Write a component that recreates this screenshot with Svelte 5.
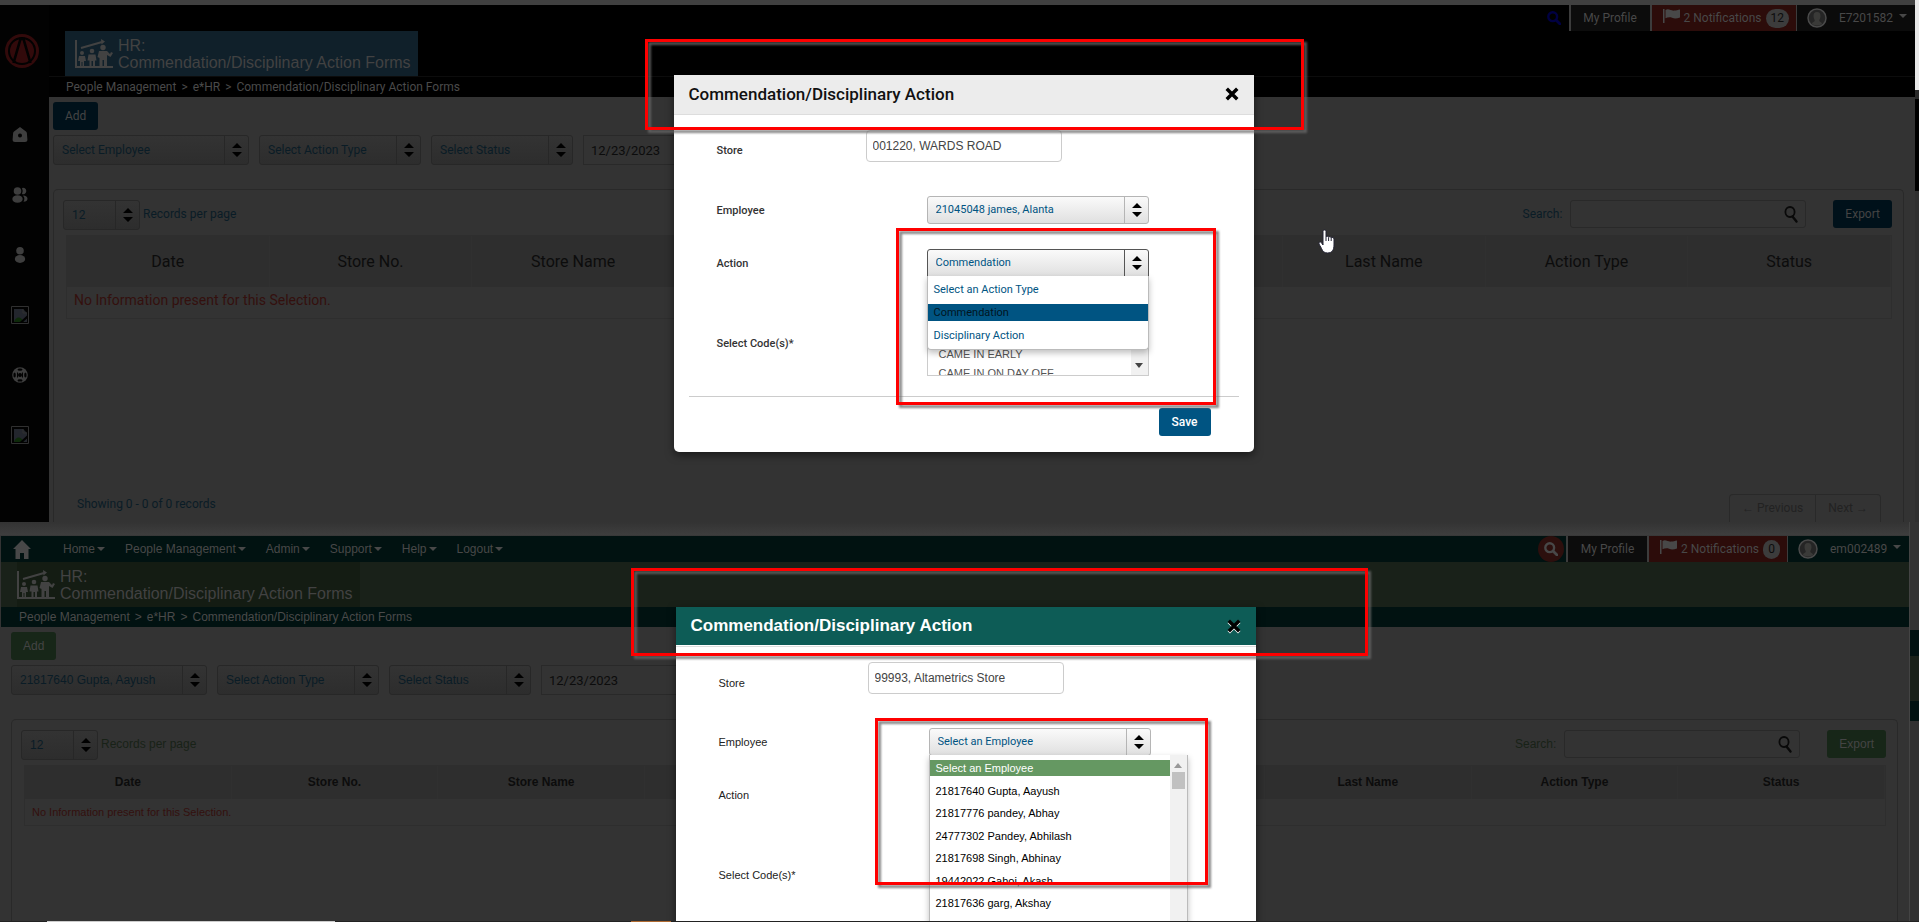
<script>
  const columns = ['Date', 'Store No.', 'Store Name', '', '', '', 'Last Name', 'Action Type', 'Status'];
  const menu = ['Home', 'People Management', 'Admin', 'Support', 'Help', 'Logout'];
  const sideIcons = ['home', 'team', 'person', 'broken', 'globe', 'broken'];
  const actionTypes = ['Select an Action Type', 'Commendation', 'Disciplinary Action'];
  const employees = [
    'Select an Employee',
    '21817640 Gupta, Aayush',
    '21817776 pandey, Abhay',
    '24777302 Pandey, Abhilash',
    '21817698 Singh, Abhinay',
    '19442022 Gahoi, Akash',
    '21817636 garg, Akshay'
  ];
</script>

{#snippet picker(id, label, value, size)}
  <span class="picker {size}">
    <select {id} aria-label={label}>
      <option>{value}</option>
    </select>
    <svg class="arrows" viewBox="0 0 10 14" aria-hidden="true">
      <path d="M5 0 10 5H0zM5 14 0 9h10z" />
    </svg>
  </span>
{/snippet}

{#snippet caret()}
  <svg class="caret" viewBox="0 0 8 4" aria-hidden="true"><path d="M0 0h8L4 4z" /></svg>
{/snippet}

{#snippet glass()}
  <svg class="glass" viewBox="0 0 14 14" aria-hidden="true">
    <circle cx="5.7" cy="5.7" r="4.4" fill="none" stroke="currentColor" stroke-width="2.4" />
    <path d="m9 9 4 4" stroke="currentColor" stroke-width="2.8" stroke-linecap="round" />
  </svg>
{/snippet}

{#snippet account(user, count)}
  <div class="account">
    <button class="find" aria-label="Search site">{@render glass()}</button>
    <a class="profile" href="#profile">My Profile</a>
    <a class="notes" href="#notifications">
      <svg class="flag" viewBox="0 0 17 14" aria-hidden="true">
        <path d="M0 0h1.500v14H0zM2.500 1c3-2 5.500 1 8.500 .6 2 0 4-1 6-1.200v8c-3 1-5 1.500-8 .4-2-.8-4.500-.4-6.500 .4z" />
      </svg>
      <span>2 Notifications</span>
      <span class="count">{count}</span>
    </a>
    <a class="user" href="#account">
      <svg class="avatar" viewBox="0 0 20 20" aria-hidden="true">
        <circle cx="10" cy="10" r="9" fill="#252525" stroke="#4a4a4a" stroke-width="1.500" />
        <path d="M10 4c3 0 3.800 2 3.400 5-.3 2-1 2.600-1.200 3.500.3 1.500 2.500 1.500 3 3.200a8 8 0 0 1-10.400 0c.5-1.700 2.700-1.700 3-3.200-.2-.9-.9-1.500-1.200-3.500C6.200 6 7 4 10 4z" fill="#3a3a38" />
      </svg>
      <span>{user}</span>
      {@render caret()}
    </a>
  </div>
{/snippet}

{#snippet heading()}
  <div class="band">
    <h1>
      <svg class="chart" viewBox="0 0 38 30" aria-hidden="true">
        <path d="M1 1v27h37M6 9 27 3" fill="none" stroke="currentColor" stroke-width="2" />
        <path d="m26 0 4 2.500-3.500 3z" />
        <circle cx="7" cy="14" r="2" /><circle cx="17" cy="12" r="2.300" /><circle cx="28" cy="8.500" r="2.700" />
        <path d="M4 17h6l1 5H9v5H7.500v-4h-1v4H5v-5H3zM13.500 15.500h7l1 6H20V27h-2v-5h-1.500v5h-2v-5.500h-2zM24 12h8l3 3 1-2 2 1-2.500 4L32 16v11h-3v-6h-1.500v6h-3v-8l-2-1z" />
      </svg>
      <span>HR:<br />Commendation/Disciplinary Action Forms</span>
    </h1>
  </div>
  <nav class="crumbs" aria-label="Breadcrumb">
    <a href="#people">People Management</a><span>&gt;</span><a href="#ehr">e*HR</a><span>&gt;</span><a href="#forms">Commendation/Disciplinary Action Forms</a>
  </nav>
{/snippet}

{#snippet records(key, employee)}
  <main>
    <button class="btn add">Add</button>
    <div class="filters">
      {@render picker(`${key}-employee`, 'Employee', employee, 'wide')}
      {@render picker(`${key}-type`, 'Action type', 'Select Action Type', 'medium')}
      {@render picker(`${key}-status`, 'Status', 'Select Status', 'small')}
      <input class="date" type="text" value="12/23/2023" aria-label="Date" />
    </div>
    <section class="panel">
      <div class="toolbar">
        {@render picker(`${key}-count`, 'Records per page', '12', 'tiny')}
        <label class="per-page" for="{key}-count">Records per page</label>
        <label class="search-label" for="{key}-search">Search:</label>
        <span class="search">
          <input id="{key}-search" type="text" />
          <svg viewBox="0 0 14 17" aria-hidden="true">
            <ellipse cx="6" cy="6" rx="4.600" ry="5" fill="none" stroke="currentColor" stroke-width="1.800" />
            <path d="m8.500 10.500 4 5" stroke="currentColor" stroke-width="2.400" stroke-linecap="round" />
          </svg>
        </span>
        <button class="btn">Export</button>
      </div>
      <table>
        <thead>
          <tr>{#each columns as column}<th>{column}</th>{/each}</tr>
        </thead>
        <tbody>
          <tr><td colspan={columns.length}>No Information present for this Selection.</td></tr>
        </tbody>
      </table>
      <div class="footer">
        <span>Showing 0 - 0 of 0 records</span>
        <div class="pages">
          <button>← Previous</button>
          <button>Next →</button>
        </div>
      </div>
    </section>
  </main>
{/snippet}

{#snippet dialog(key, store, employee, type)}
  <header>
    <h2>Commendation/Disciplinary Action</h2>
    <button class="close" aria-label="Close">
      <svg viewBox="0 0 12 12" aria-hidden="true"><path d="m1.500 1.500 9 9m0-9-9 9" /></svg>
    </button>
  </header>
  <form>
    <div class="row store">
      <label for="{key}-m-store">Store</label>
      <input id="{key}-m-store" type="text" value={store} />
    </div>
    <div class="row">
      <label for="{key}-m-employee">Employee</label>
      <div class="field">
        {@render picker(`${key}-m-employee`, 'Employee', employee, 'full')}
        {#if key === 'green'}
          <div class="drop employees">
            <ul>
              {#each employees as name, i}
                <li class:picked={i === 0}>{name}</li>
              {/each}
            </ul>
            <div class="bar">
              <svg viewBox="0 0 8 5" aria-hidden="true"><path d="M4 0 8 5H0z" /></svg>
              <i></i>
            </div>
          </div>
        {/if}
      </div>
    </div>
    <div class="row">
      <label for="{key}-m-action">Action</label>
      <div class="field" class:open={key === 'dark'}>
        {@render picker(`${key}-m-action`, 'Action', type, 'full')}
        {#if key === 'dark'}
          <ul class="drop actions">
            {#each actionTypes as name}
              <li class:picked={name === type}>{name}</li>
            {/each}
          </ul>
        {/if}
      </div>
    </div>
    <div class="row codes">
      <span class="label">Select Code(s)*</span>
      <div class="field list">
        <ul>
          {#if key === 'dark'}
            <li>CAME IN EARLY</li>
            <li>CAME IN ON DAY OFF</li>
          {/if}
        </ul>
        <div class="bar">
          <svg viewBox="0 0 8 5" aria-hidden="true"><path d="M0 0h8L4 5z" /></svg>
        </div>
      </div>
    </div>
    <div class="actions-row"><button type="button" class="save">Save</button></div>
  </form>
{/snippet}

<div class="app">
  <section class="screen dark">
    <div class="window">
      <aside>
        <svg class="brand" viewBox="0 0 34 34" aria-hidden="true">
          <circle cx="17" cy="17" r="15.500" fill="none" stroke="currentColor" stroke-width="3" />
          <circle cx="17" cy="17" r="12" />
          <path d="M8.500 29 15.500 5h3l7 24" fill="none" stroke="#020202" stroke-width="2.600" />
        </svg>
        <nav>
          {#each sideIcons as icon}
            <a href="#{icon}" aria-label={icon}>
              <svg viewBox="0 0 18 18" aria-hidden="true">
                {#if icon === 'home'}
                  <path fill-rule="evenodd" d="M9 1l6 4.500c.6.500.8 1 .9 1.700l.5 6.300c0 1.800-.9 2.500-2.400 2.500H4c-1.500 0-2.400-.7-2.400-2.500l.5-6.300c.1-.7.3-1.200.9-1.700zm0 6.500a2 2 0 1 0 0 4 2 2 0 0 0 0-4z" />
                {:else if icon === 'team'}
                  <circle cx="6.500" cy="5" r="3.800" /><ellipse cx="6.500" cy="13" rx="5.200" ry="3.800" />
                  <path d="M11 2a3.200 3.200 0 1 1 0 6 7 7 0 0 0 0-6zM12 9.500c3 0 4.500 1.500 4.500 3.300s-1.500 3-4 3a6 6 0 0 0 .8-4z" />
                {:else if icon === 'person'}
                  <circle cx="9" cy="4.800" r="3.800" /><ellipse cx="9" cy="13" rx="5.200" ry="3.900" />
                {:else if icon === 'globe'}
                  <circle cx="9" cy="9" r="7.800" />
                  <g fill="#020202">
                    <ellipse cx="9" cy="3.600" rx="2.500" ry="1.200" />
                    <ellipse cx="9" cy="14.400" rx="2.500" ry="1.200" />
                    <ellipse cx="3.600" cy="9" rx="1.200" ry="2.500" />
                    <ellipse cx="14.400" cy="9" rx="1.200" ry="2.500" />
                    <circle cx="9" cy="9" r="2" />
                    <path d="M6 6.500h1v5H6zM11 6.500h1v5h-1z" />
                  </g>
                {:else}
                  <path d="M.5.500h17v17H.5z" fill="none" stroke="#303030" />
                  <path d="M3 3h9l4 4v9H3z" fill="#23262d" />
                  <path d="M3 16c2-6 7-6 10 0z" fill="#0e2a0a" />
                  <path d="M16 9.500 9 16h3l4-3.500z" fill="#020202" />
                  <path d="M12 3v4h4" fill="none" stroke="#303030" />
                {/if}
              </svg>
            </a>
          {/each}
        </nav>
      </aside>
      <div class="page">
        <div class="topbar">{@render account('E7201582', 12)}</div>
        {@render heading()}
        {@render records('dark', 'Select Employee')}
      </div>
    </div>
    <div class="edge"><i class="lit"></i><i class="gap"></i><i class="nav-bit"></i></div>
    <div class="modal" role="dialog" aria-label="Commendation/Disciplinary Action">
      {@render dialog('dark', '001220, WARDS ROAD', '21045048 james, Alanta', 'Commendation')}
      <div class="mark mark-title"></div>
      <div class="mark mark-list"></div>
    </div>
    <svg class="hand" viewBox="0 0 18 25" aria-hidden="true">
      <path d="M5 2.500c0-2 3-2 3 0V8c.5-1 2.300-1 2.600.3.600-1 2.300-.8 2.600.5.800-.8 2.800-.4 2.800 1.200v6c0 5-2 8-6.500 8-3.500 0-5-2-6-4.500L1 15c-.6-1.800 1.300-2.800 2.500-1.300L5 16z" fill="#fff" stroke="#223" />
      <path d="M8 8v4M10.600 8.500V12M13.200 9v3" stroke="#223" />
    </svg>
  </section>

  <section class="screen green">
    <div class="window">
      <div class="page">
        <div class="topbar">
          <nav class="menu">
            <svg class="house" viewBox="0 0 18 19" aria-hidden="true"><path d="M9 0l9 9h-2.500v10h-4.500v-6H7v6H2.500V9H0z" /></svg>
            {#each menu as item}
              <a href="#{item}">{item}{@render caret()}</a>
            {/each}
          </nav>
          {@render account('em002489', 0)}
        </div>
        {@render heading()}
        {@render records('green', '21817640 Gupta, Aayush')}
      </div>
    </div>
    <div class="edge"><i class="gap"></i><i class="nav-bit"></i><i class="band-bit"></i><i class="nav-bit low"></i></div>
    <div class="modal" role="dialog" aria-label="Commendation/Disciplinary Action">
      {@render dialog('green', '99993, Altametrics Store', 'Select an Employee', 'Select an Action Type')}
      <div class="mark mark-title"></div>
      <div class="mark mark-list"></div>
    </div>
  </section>
  <div class="taskbar"><i class="task"></i><i class="task alert"></i></div>
</div>

<style>
  :global(body) {
    margin: 0;
    background: #3c3c3c;
  }

  .app {
    display: grid;
    grid-template-rows: 522fr 399fr 1px;
    height: 100vh;
    overflow: hidden;
    font-family: Roboto, "Liberation Sans", sans-serif;
    font-size: 12px;
  }

  .app * {
    box-sizing: border-box;
  }

  button,
  input,
  select {
    font: inherit;
    color: inherit;
    margin: 0;
  }

  a {
    color: inherit;
    text-decoration: none;
  }

  ul {
    list-style: none;
    margin: 0;
    padding: 0;
  }

  svg {
    fill: currentColor;
    flex: none;
  }

  /* the two browser windows */
  .screen {
    position: relative;
    display: flex;
    min-height: 0;
    overflow: hidden;
  }

  .dark {
    --bar: #000;
    --band: #000;
    --title: #10202a;
    --accent: #00111a;
    --label: #0a1c26;
    --left: 4px;
    padding-top: 5px;
    background: #404040;
  }

  .green {
    --bar: #011211;
    --band: #192119;
    --title: #141c13;
    --accent: #172618;
    --label: #182217;
    --left: 10px;
    padding: 14px 0 0 1px;
    background: linear-gradient(#333, #3e3e3e 13px, #333 14px);
    font-family: "Liberation Sans", sans-serif;
  }

  .window {
    display: flex;
    flex: 1;
    min-width: 0;
    background: #333;
  }

  .page {
    display: flex;
    flex-direction: column;
    flex: 1;
    min-width: 0;
  }

  aside {
    width: 49px;
    background: #020202;
    color: #3e3e3e;
    padding-top: 29px;
  }

  .brand {
    display: block;
    width: 34px;
    height: 34px;
    margin-left: 5px;
    color: #320a0b;
  }

  aside nav {
    display: flex;
    flex-direction: column;
    width: 40px;
    padding-top: 37px;
  }

  aside nav a {
    display: flex;
    align-items: center;
    justify-content: center;
    height: 60px;
  }

  aside nav svg {
    width: 18px;
    height: 18px;
  }

  .topbar {
    display: flex;
    height: 26px;
    background: var(--bar);
    color: #484848;
  }

  .menu {
    display: flex;
    align-items: center;
    gap: 20px;
    padding-left: 12px;
  }

  .menu a {
    display: flex;
    align-items: center;
    gap: 2px;
  }

  .house {
    width: 18px;
    height: 19px;
    margin-right: 12px;
  }

  .caret {
    width: 8px;
    height: 4px;
  }

  .account {
    display: flex;
    margin-left: auto;
    font-family: Roboto, "Liberation Sans", sans-serif;
  }

  .account a {
    display: flex;
    align-items: center;
    border-left: 2px solid #3c3c3c;
  }

  .find {
    align-self: center;
    display: flex;
    align-items: center;
    justify-content: center;
    width: 26px;
    height: 26px;
    margin-right: 2px;
    padding: 0;
    border: 0;
    border-radius: 13px;
    background: none;
    color: #000042;
  }

  .green .find {
    background: #2c0f0d;
    color: #484848;
  }

  .glass {
    width: 14px;
    height: 14px;
  }

  .account .profile {
    width: 81px;
    justify-content: center;
    background: #0c0c0c;
  }

  .account .notes {
    padding: 0 7px 0 11px;
    gap: 4px;
    background: #2c0c0a;
  }

  .flag {
    width: 17px;
    height: 14px;
    margin-bottom: 4px;
  }

  .count {
    min-width: 17px;
    padding: 0 5px;
    border-radius: 10px;
    background: #3c3c3c;
    color: #0c0c0c;
    line-height: 19px;
    text-align: center;
  }

  .account .user {
    width: 119px;
    padding-left: 10px;
    border-left-width: 1px;
    background: #0b0b0b;
  }

  .green .account .user {
    width: 122px;
    background: var(--bar);
  }

  .avatar {
    width: 20px;
    height: 20px;
    margin-right: 12px;
  }

  .user .caret {
    margin: 0 8px 4px auto;
  }

  .band {
    display: flex;
    height: 45px;
    padding-left: 16px;
    background: var(--band);
    color: #424242;
  }

  h1 {
    display: flex;
    align-items: center;
    gap: 5px;
    margin: 0;
    padding: 0 7px 0 10px;
    background: var(--title);
    font: 400 16px/17px "Liberation Sans", sans-serif;
  }

  .green h1 {
    padding-left: 0;
  }

  .chart {
    width: 38px;
    height: 30px;
  }

  .crumbs {
    display: flex;
    align-items: center;
    gap: 5px;
    height: 20px;
    padding-left: 18px;
    background: var(--bar);
    color: #4a4a4a;
  }

  .dark .crumbs {
    height: 21px;
    padding-left: 17px;
    border-top: 1px solid #0c0c0c;
  }

  /* records page */
  main {
    display: flex;
    flex-direction: column;
    flex: 1;
    min-height: 0;
    padding: 5px 11px 0 var(--left);
  }

  .btn {
    height: 28px;
    padding: 0 12px;
    border: 0;
    border-radius: 3px;
    background: var(--accent);
    color: #444;
  }

  .add {
    align-self: flex-start;
  }

  .filters {
    display: flex;
    gap: 10px;
    margin: 5px 0 24px;
  }

  .picker {
    display: grid;
    grid-template-columns: 1fr 25px;
    height: 30px;
    font-family: Roboto, "Liberation Sans", sans-serif;
  }

  .green main .picker {
    font-family: "Liberation Sans", sans-serif;
  }

  .picker select {
    grid-area: 1 / 1 / 2 / 3;
    appearance: none;
    min-width: 0;
    padding: 0 30px 1px 8px;
    border: 1px solid #272727;
    border-radius: 3px;
    background: linear-gradient(#333, #2d2d2d);
    color: #0a1c26;
  }

  .arrows {
    grid-area: 1 / 2;
    box-sizing: border-box;
    width: 25px;
    height: 100%;
    padding: 8px 0;
    border-left: 1px solid #272727;
    color: #000;
    pointer-events: none;
  }

  .wide { width: 196px; }
  .medium { width: 162px; }
  .small { width: 142px; }
  .tiny { width: 77px; }
  .full { width: 222px; }

  .date {
    width: 160px;
    height: 30px;
    padding: 0 7px;
    border: 1px solid #292929;
    background: #333;
    color: #0c0c0c;
    font-family: Roboto, "Liberation Sans", sans-serif;
    font-size: 13px;
  }

  .panel {
    display: flex;
    flex-direction: column;
    flex: 1;
    min-height: 0;
    padding-top: 10px;
    border: 1px solid #292929;
    border-bottom: 0;
    border-radius: 5px 5px 0 0;
  }

  .toolbar {
    display: flex;
    margin: 0 11px 5px 9px;
    color: var(--label);
  }

  .toolbar label {
    line-height: 28px;
  }

  .per-page {
    margin: 0 auto 0 3px;
  }

  .search {
    display: grid;
    grid-template-columns: 1fr 22px;
    align-items: center;
    width: 236px;
    height: 28px;
    margin: 0 27px 0 8px;
  }

  .search input {
    grid-area: 1 / 1 / 2 / 3;
    min-width: 0;
    height: 28px;
    border: 1px solid #292929;
    border-radius: 3px;
    background: #333;
  }

  .search svg {
    grid-area: 1 / 2;
    width: 14px;
    height: 17px;
    color: #090909;
  }

  table {
    width: calc(100% - 23px);
    margin: 0 11px 0 12px;
    border: 1px solid #2e2e2e;
    border-spacing: 0;
    table-layout: fixed;
    color: #0c0c0c;
  }

  th {
    height: 51px;
    padding: 0;
    background: #2e2e2e;
    border-right: 1px solid #303030;
    font-size: 16px;
    font-weight: 400;
  }

  td {
    height: 31px;
    padding: 0 0 6px 7px;
    color: #34100e;
    font-size: 14px;
  }

  .green th {
    height: 33px;
    padding-bottom: 2px;
    font-size: 12px;
    font-weight: 700;
  }

  .green td {
    height: 26px;
    padding-bottom: 0;
    font-size: 11px;
  }

  .footer {
    display: flex;
    justify-content: space-between;
    margin-top: auto;
    padding: 0 22px 0 23px;
    overflow: hidden;
    color: var(--label);
    line-height: 21px;
  }

  .green .footer {
    display: none;
  }

  .pages {
    display: flex;
    border: 1px solid #292929;
    border-bottom: 0;
    border-radius: 4px 4px 0 0;
  }

  .pages button {
    height: 27px;
    padding: 0 12px;
    border: 0;
    background: none;
    color: #222;
  }

  .pages button + button {
    border-left: 1px solid #292929;
  }

  /* slivers of the windows behind */
  .edge {
    display: flex;
    flex-direction: column;
    width: 4px;
    margin-top: -5px;
    background: #2f2f2f;
  }

  .green .edge {
    width: 10px;
    margin-top: -14px;
    border-left: 1px solid #444;
    background: #313131;
  }

  .lit {
    height: 90px;
    background: #e8e8e8;
  }

  .gap {
    height: 9px;
    background: #2a2a2a;
  }

  .nav-bit {
    height: 92px;
    background: #000;
  }

  .green .gap {
    height: 108px;
    background: #333;
  }

  .green .nav-bit {
    height: 26px;
    background: var(--bar);
  }

  .band-bit {
    height: 45px;
    background: var(--band);
  }

  .green .low {
    height: 20px;
  }

  /* dialogs */
  .modal {
    position: absolute;
    top: 75px;
    left: calc(50% - 286px);
    width: 580px;
    border-radius: 0 0 5px 5px;
    background: #fff;
    color: #333;
    box-shadow: 0 3px 8px rgba(0, 0, 0, 0.5);
    font-size: 11px;
  }

  .green .modal {
    top: 85px;
    left: calc(50% - 284px);
  }

  .modal header {
    display: flex;
    align-items: center;
    justify-content: space-between;
    height: 40px;
    padding: 0 15px 2px;
    border-bottom: 1px solid #ddd;
    background: #ececec;
    color: #111;
  }

  .green .modal header {
    background: linear-gradient(#0d5c56 38px, #fff 38px);
    color: #fff;
  }

  h2 {
    margin: 0;
    font-size: 17px;
    font-weight: 500;
  }

  .green h2 {
    font-weight: 700;
  }

  .close {
    display: flex;
    padding: 0;
    border: 0;
    background: none;
    color: #000;
  }

  .close svg {
    width: 14px;
    height: 14px;
    fill: none;
    stroke: currentColor;
    stroke-width: 3;
  }

  .green .close svg {
    filter: drop-shadow(0 1px 0 #fff);
  }

  form {
    padding: 15px 15px 16px;
  }

  .row {
    display: flex;
    align-items: center;
    margin-bottom: 25px;
    padding-left: 28px;
  }

  .row label,
  .row .label {
    width: 210px;
    font-weight: 500;
  }

  .green .row label,
  .green .row .label {
    font-weight: 400;
    color: #222;
  }

  .row.store {
    margin-bottom: 34px;
  }

  .row.store label {
    width: 149px;
    padding-top: 9px;
  }

  .row.store input {
    width: 196px;
    height: 32px;
    padding: 0 6px 1px;
    border: 1px solid #ccc;
    border-radius: 4px;
    background: #fff;
    color: #444;
    font-family: "Liberation Sans", sans-serif;
    font-size: 12px;
  }

  .field {
    position: relative;
  }

  .modal .picker {
    height: 28px;
  }

  .modal .picker select {
    border-color: #b5b5b5;
    background: linear-gradient(#fafafa, #e0e0e0);
    color: #005482;
  }

  .modal .arrows {
    padding: 7px 0;
    border-color: #b5b5b5;
  }

  .open .picker select {
    border-color: #555;
    border-radius: 3px 3px 0 0;
  }

  .modal .open .arrows {
    border-color: #555;
  }

  .drop {
    position: absolute;
    z-index: 2;
    top: 27px;
    left: 0;
    border: 1px solid #bbb;
    border-top: 0;
    border-radius: 0 0 4px 4px;
    background: #fff;
    box-shadow: 0 3px 6px rgba(0, 0, 0, 0.25);
  }

  .actions {
    display: grid;
    gap: 6px;
    width: 222px;
    padding: 5px 0;
    color: #005482;
  }

  .actions li {
    padding: 0 6px;
    line-height: 17px;
  }

  .actions .picked {
    background: #005482;
    color: #00141f;
  }

  .employees {
    display: flex;
    width: 259px;
    height: 200px;
    color: #000;
  }

  .employees ul {
    display: flex;
    flex-direction: column;
    justify-content: space-between;
    flex: 1;
    height: 156px;
    padding-top: 5px;
  }

  .employees li {
    padding-left: 6px;
    line-height: 16px;
  }

  .employees .picked {
    background: #659862;
    color: #fff;
  }

  .bar {
    display: flex;
    flex-direction: column;
    align-items: center;
    width: 17px;
    padding-top: 8px;
    background: #f1f1f1;
    color: #999;
  }

  .bar svg {
    width: 8px;
    height: 5px;
  }

  .bar i {
    width: 13px;
    height: 17px;
    margin-top: 4px;
    background: #c1c1c1;
  }

  .codes {
    margin: 33px 0 20px;
  }

  .list {
    display: flex;
    justify-content: space-between;
    width: 222px;
    height: 66px;
    border: 1px solid #ccc;
    overflow: hidden;
    color: #555;
  }

  .list ul {
    padding: 34px 0 0 11px;
    font-family: "Liberation Sans", sans-serif;
    line-height: 19px;
  }

  .list .bar {
    justify-content: flex-end;
    padding-bottom: 7px;
    color: #444;
  }

  .actions-row {
    display: flex;
    justify-content: flex-end;
    padding: 11px 28px 0;
    border-top: 1px solid #ccc;
  }

  .save {
    height: 28px;
    padding: 0 13px;
    border: 0;
    border-radius: 3px;
    background: #005482;
    color: #fff;
    font-size: 12px;
    font-weight: 500;
  }

  /* red highlight frames drawn over the dialogs */
  .mark {
    position: absolute;
    z-index: 3;
    border: 3px solid #f00;
    filter: drop-shadow(3px 3px 1px rgba(105, 105, 105, 0.8));
    pointer-events: none;
  }

  .mark-title {
    top: -36px;
    left: -29px;
    width: 659px;
    height: 91px;
  }

  .mark-list {
    top: 153px;
    left: 222px;
    width: 320px;
    height: 177px;
  }

  .green .mark-title {
    top: -39px;
    left: -45px;
    width: 737px;
    height: 88px;
  }

  .green .mark-list {
    top: 111px;
    left: 199px;
    width: 333px;
    height: 167px;
  }

  .hand {
    position: absolute;
    top: 229px;
    left: 68.700%;
    width: 18px;
    height: 25px;
  }

  .taskbar {
    display: flex;
    background: #222;
  }

  .task {
    width: 288px;
    margin-left: 47px;
    background: #ccc;
  }

  .task.alert {
    width: 40px;
    margin-left: 296px;
    background: #b06a30;
  }
</style>
